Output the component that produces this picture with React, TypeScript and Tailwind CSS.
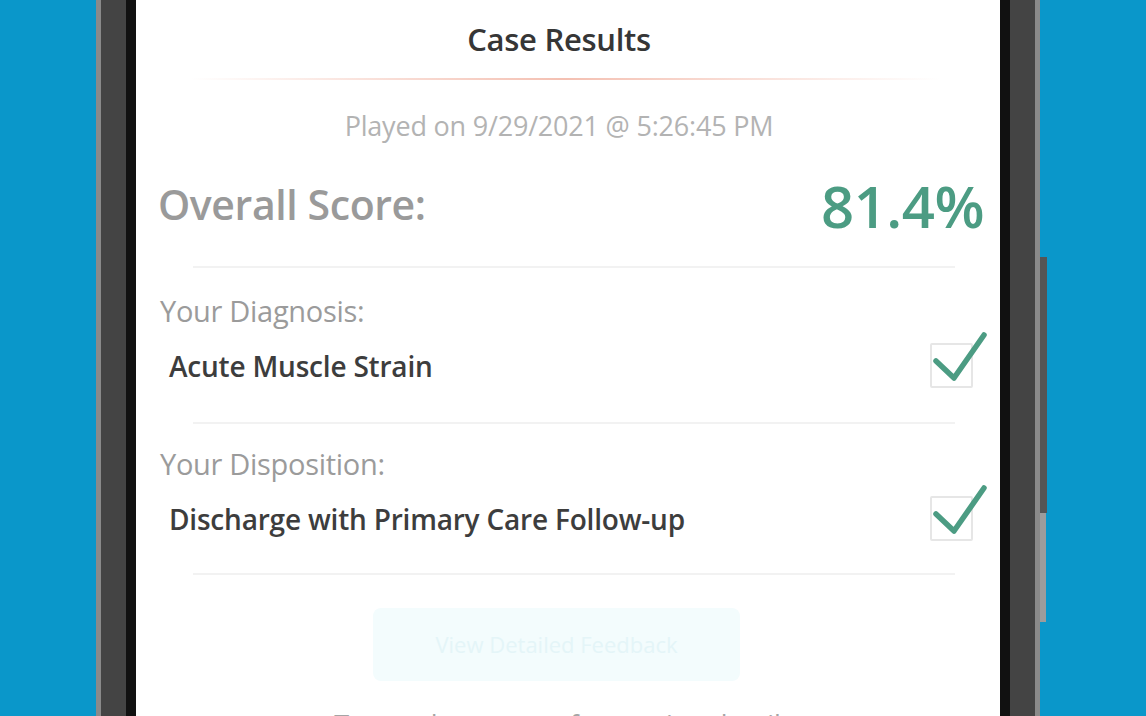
import React from 'react';

type ResultRowProps = {
  label: string;
  value: string;
};

function CheckBox() {
  return (
    <div className="relative w-[43px] h-[45px] border-2 border-[#e6e6e6] rounded-[2px] shrink-0">
      <svg
        className="absolute left-[1px] top-[-13px] overflow-visible"
        width="56"
        height="50"
        viewBox="0 0 56 50"
        fill="none"
      >
        <path
          d="M3 29 L21 46 L51 3"
          stroke="#4c9c83"
          strokeWidth="5.5"
          strokeLinecap="round"
          strokeLinejoin="round"
        />
      </svg>
    </div>
  );
}

function ResultRow({ label, value }: ResultRowProps) {
  return (
    <div>
      <div className="pl-[24px] text-[29px] leading-[36px] font-medium text-[#9b9b9b] tracking-[-0.3px]">{label}</div>
      <div className="mt-[14px] h-[45px] flex items-center justify-between pl-[33px] pr-[27px]">
        <span className="text-[28px] font-semibold text-[#3d3d3d] tracking-[-0.2px]">{value}</span>
        <CheckBox />
      </div>
    </div>
  );
}

function Divider() {
  return <div className="ml-[57px] mr-[45px] h-[2px] bg-[#f2f2f2]" />;
}

export default function App() {
  const rows: ResultRowProps[] = [
    { label: 'Your Diagnosis:', value: 'Acute Muscle Strain' },
    { label: 'Your Disposition:', value: 'Discharge with Primary Care Follow-up' },
  ];

  return (
    <div
      className="w-full h-[716px] overflow-hidden bg-[#0a97ca] flex"
      style={{ fontFamily: '"Open Sans", "Noto Sans", sans-serif' }}
    >
      <div className="relative ml-[96px] w-[944px] h-full flex border-x-[5px] border-[#8a8a8a] bg-[#444444] px-[25px]">
        {/* side buttons */}
        <div className="absolute right-[-12px] top-[257px] w-[7px] h-[256px] bg-[#555555]" />
        <div className="absolute right-[-11px] top-[513px] w-[6px] h-[109px] bg-[#9c9c9c]" />

        <div className="flex-1 flex bg-[#111111] px-[10px]">
          <div className="flex-1 bg-white overflow-hidden">
            <div className="h-[78px] flex items-center justify-center pr-[18px]">
              <h1 className="text-[31px] font-semibold text-[#363636] tracking-[-0.3px]">Case Results</h1>
            </div>
            <div className="ml-[54px] mr-[60px] h-[2px] bg-gradient-to-r from-transparent via-[#f4c0b2] to-transparent" />

            <div className="h-[92px] flex items-center justify-center pr-[18px]">
              <span className="text-[27px] text-[#b3b3b3] tracking-[-0.2px]">Played on 9/29/2021 @ 5:26:45 PM</span>
            </div>

            <div className="h-[66px] flex items-center justify-between pl-[22px] pr-[16px]">
              <span className="text-[41px] font-semibold text-[#9a9a9a] tracking-[-0.4px]">Overall Score:</span>
              <span className="text-[58px] font-semibold text-[#4c9c83] tracking-[-0.5px]">81.4%</span>
            </div>

            <div className="h-[28px]" />
            <Divider />

            <div className="pt-[25px] pb-[34px]">
              <ResultRow {...rows[0]} />
            </div>
            <Divider />

            <div className="pt-[22px] pb-[32px]">
              <ResultRow {...rows[1]} />
            </div>
            <Divider />

            <div className="mt-[33px] ml-[237px] w-[367px] h-[73px] rounded-lg bg-[#f3fcfd] flex items-center justify-center">
              <span className="text-[22px] text-[#e4f5f8]">View Detailed Feedback</span>
            </div>

            <div className="mt-[24px] text-center text-[27px] leading-[40px] text-[#a5a5a5] pr-[8px]">
              Tap each category for scoring details
            </div>
          </div>
        </div>
      </div>
    </div>
  );
}
